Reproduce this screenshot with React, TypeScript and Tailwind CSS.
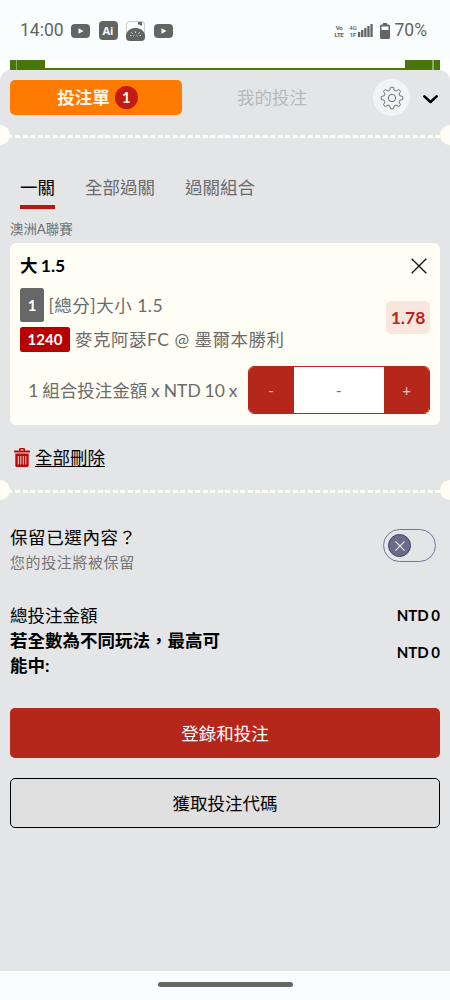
import { useState } from "react";

const tabs = ["一關", "全部過關", "過關組合"];

function YoutubeIcon() {
  return (
    <svg width="19" height="14" viewBox="0 0 19 14">
      <rect width="19" height="14" rx="4" fill="#626562" />
      <path d="M7.500 4.200v5.600l5-2.800z" fill="#f9fdfe" />
    </svg>
  );
}

function PhotoIcon() {
  return (
    <svg width="19" height="20" viewBox="0 0 19 20">
      <rect x="0.4" y="0.4" width="18.2" height="19.2" rx="3.500" fill="#f9fdfe" stroke="#b5b8b7" strokeWidth="0.8" />
      <path d="M0 14C1 9.500 5 7 9.500 7S18 9.500 19 14v2a4 4 0 0 1-4 4H4a4 4 0 0 1-4-4z" fill="#626562" />
      <path d="M12 1h4v3.500h-1.500l-1-1H12z" fill="#626562" />
      <path d="M5.500 11.500l1 .8M9.500 10.500v1.200M13.500 11.500l-1 .8M4.300 14.500h1M13.700 14.500h1M7.500 15l.8-.6M11.500 15l-.8-.6" stroke="#f9fdfe" strokeWidth="1" />
    </svg>
  );
}

function SignalIcon() {
  return (
    <svg width="15" height="13" viewBox="0 0 15 13" fill="#626562">
      <path d="M0 8h2.300v5H0zM3.100 6h2.300v7H3.100zM6.200 4h2.300v9H6.200zM9.300 2h2.300v11H9.300zM12.400 0h2.300v13h-2.300z" />
    </svg>
  );
}

function GearIcon() {
  return (
    <svg width="24" height="24" viewBox="0 0 24 24" fill="none" stroke="#5f6163" strokeWidth="0.9">
      <path
        strokeLinejoin="round"
        d="M10.400 1.500Q12 .7 13.600 1.500L14.300 4.300Q15.200 4.500 16.100 5.100L18.600 3.600Q20.200 4.200 20.500 5.500L19 8Q19.500 8.900 19.700 9.700L22.500 10.400Q23.300 12 22.500 13.600L19.700 14.300Q19.500 15.200 19 16.100L20.400 18.500Q19.800 20.100 18.500 20.400L16.100 19Q15.200 19.500 14.300 19.700L13.600 22.500Q12 23.300 10.400 22.500L9.700 19.700Q8.800 19.500 8 19L5.500 20.400Q3.900 19.800 3.600 18.500L5 16.100Q4.500 15.200 4.300 14.300L1.500 13.600Q.7 12 1.500 10.400L4.300 9.700Q4.500 8.800 5 8L3.600 5.500Q4.200 3.900 5.500 3.600L8 5.100Q8.900 4.500 9.700 4.300z"
      />
      <circle cx="12" cy="12" r="3.700" />
    </svg>
  );
}

function TrashIcon() {
  return (
    <svg width="16" height="19" viewBox="0 0 16 19">
      <path d="M0 2.500h5V1.200Q5 0 6.200 0h3.600Q11 0 11 1.200v1.300h5V4.500H0zM6.500 1.400v1.100h3V1.400z" fill="#bd0b0b" fillRule="evenodd" />
      <path d="M1.300 5.500h13.400V17.500q0 1.500-1.500 1.500H2.800q-1.500 0-1.500-1.500z" fill="#bd0b0b" />
      <path d="M4.300 8v8.500M6.800 8v8.500M9.300 8v8.500M11.800 8v8.500" stroke="#e9d5d6" strokeWidth="1" />
    </svg>
  );
}

function CloseIcon({ size, color, width }: { size: number; color: string; width: number }) {
  return (
    <svg width={size} height={size} viewBox="0 0 16 16" fill="none" stroke={color} strokeWidth={width}>
      <path d="M.7.7l14.600 14.600M15.300.7L.7 15.300" />
    </svg>
  );
}

function StatusBar() {
  return (
    <div className="flex h-[60px] items-center bg-[#f9fdfe] pl-[20px] pr-[23px] pt-[1px] font-[Roboto,sans-serif] text-[#626562]">
      <span className="w-[51px] whitespace-nowrap text-[17.5px]">14:00</span>
      <div className="flex items-center gap-[8.500px]">
        <YoutubeIcon />
        <span className="flex h-[19px] w-[19px] items-center justify-center rounded-[4px] bg-[#626562] font-['Open_Sans',sans-serif] text-[11px] font-bold text-[#f9fdfe]">
          Ai
        </span>
        <PhotoIcon />
        <YoutubeIcon />
      </div>
      <div className="ml-auto flex items-center">
        <span className="mr-[5px] flex w-[9px] flex-col items-center text-[6px] font-bold leading-[7px] tracking-[-0.3px]">
          <span>Vo</span>
          <span>LTE</span>
        </span>
        <span className="flex w-[9px] flex-col items-center text-[6px] font-medium leading-[7px]">
          <span>4G</span>
          <span className="font-bold">1F</span>
        </span>
        <SignalIcon />
        <svg className="ml-[7px]" width="10" height="16" viewBox="0 0 10 16">
          <path d="M3 0h4v1.500h1.500Q10 1.500 10 3v11.500q0 1.500-1.500 1.500h-7Q0 16 0 14.500V3q0-1.500 1.500-1.500H3z" fill="#626562" />
          <path d="M1.500 3.500h7V7h-7z" fill="#f9fdfe" />
        </svg>
        <span className="ml-[5px] text-[17.5px]">70%</span>
      </div>
    </div>
  );
}

function Divider() {
  return (
    <div className="flex h-[20px] items-center overflow-hidden">
      <span className="-ml-[10px] h-[20px] w-[20px] rounded-full bg-[#fffef5]" />
      <span className="mt-[2px] h-[3px] flex-1 bg-[repeating-linear-gradient(90deg,#fffef5_0,#fffef5_2.500px,transparent_2.500px,transparent_5px,#fffef5_5px,#fffef5_7.500px)]" />
      <span className="-mr-[10px] h-[20px] w-[20px] rounded-full bg-[#fffef5]" />
    </div>
  );
}

function BetCard() {
  return (
    <div className="mx-[10px] h-[181.500px] rounded-[6px] bg-[#fffef5] px-[10px] pt-[10px]">
      <div className="flex h-[25px] items-center justify-between">
        <h3 className="font-bold text-black [word-spacing:-1px]">大 1.5</h3>
        <button className="mr-[3px]">
          <CloseIcon size={16} color="#111111" width={1.3} />
        </button>
      </div>

      <div className="mt-[10px] flex h-[64px] items-start justify-between text-[#6b6b6b]">
        <div>
          <div className="flex items-center">
            <span className="flex h-[34px] w-[24px] items-center justify-center rounded-[2.500px] bg-[#676767] text-[15px] font-bold text-white">1</span>
            <span className="ml-[4.500px] tracking-[0.5px]">[總分]大小 1.5</span>
          </div>
          <div className="mt-[5px] flex h-[25px] items-center">
            <span className="flex h-[25px] w-[50px] items-center justify-center rounded-[2.500px] bg-[#b70000] text-[15px] font-bold text-white">1240</span>
            <span className="ml-[5px] whitespace-nowrap tracking-[0.5px]">麥克阿瑟FC @ 墨爾本勝利</span>
          </div>
        </div>
        <span className="mt-[13px] flex h-[33px] w-[44px] items-center justify-center rounded-[5px] bg-[#f8e6df] font-bold text-[#b5261b]">1.78</span>
      </div>

      <div className="mt-[14px] flex h-[48px] items-center justify-end text-[#6b6b6b]">
        <span className="mr-[10px] whitespace-nowrap [word-spacing:-0.6px]">1 組合投注金額 x NTD 10 x</span>
        <div className="flex h-[48px] w-[182.500px] overflow-hidden rounded-[6px] border border-[#b5261b] bg-white">
          <button className="w-[45px] bg-[#b5261b] text-[15px] text-[#f0c9c5]">-</button>
          <span className="flex flex-1 items-center justify-center text-[15px]">-</span>
          <button className="w-[45px] bg-[#b5261b] text-[15px] text-[#f0c9c5]">+</button>
        </div>
      </div>
    </div>
  );
}

export default function App() {
  const [activeTab, setActiveTab] = useState(0);

  return (
    <div className="h-[1000px] w-[450px] overflow-hidden bg-white font-[Lato,'Noto_Sans_CJK_TC',sans-serif] text-[17.5px] leading-[25px] text-black">
      <StatusBar />

      {/* strip of the page behind the slip */}
      <div className="mx-[10px] flex h-[10px] bg-[#49760b]">
        <span className="ml-[6px] mr-[28px] w-px bg-[#91ad68]" />
        <span className="h-[8px] flex-1 bg-white" />
        <span className="ml-[27px] mr-[6px] w-[2px] bg-[#91ad68]" />
      </div>

      <main className="h-[901px] rounded-t-[11px] bg-[#e4e5e7]">
        <header className="flex h-[55px] items-center px-[10px]">
          <button className="flex h-[35px] w-[172px] items-center justify-center gap-[5px] rounded-[5px] bg-[#ff7b00] pl-[3px] font-bold text-[#fff5e8]">
            投注單
            <span className="flex h-[23px] w-[23px] items-center justify-center rounded-full bg-[#c31a12] text-[15px]">1</span>
          </button>
          <button className="w-[180px] text-[#b8b9ba]">我的投注</button>
          <button className="ml-[11px] flex h-[37px] w-[37px] items-center justify-center rounded-full bg-[#f2f3f5]">
            <GearIcon />
          </button>
          <svg className="ml-[13px] mt-[3px]" width="15" height="9" viewBox="0 0 15 9" fill="none" stroke="#000" strokeWidth="2.6">
            <path d="M1.400 1.400l6.100 5.600 6.100-5.600" strokeLinecap="round" strokeLinejoin="round" />
          </svg>
        </header>

        <Divider />

        <nav className="mt-[30px] flex h-[34px] gap-[30px] pl-[20px]">
          {tabs.map((tab, idx) => (
            <button
              key={tab}
              onClick={() => setActiveTab(idx)}
              className={`flex h-[34px] border-b-4 ${activeTab === idx ? "border-[#c0100f] text-black" : "border-transparent text-[#6b6b6b]"}`}
            >
              {tab}
            </button>
          ))}
        </nav>

        <p className="mt-[10px] h-[24px] pl-[10px] text-[13.4px] leading-[20px] text-[#6f7071]">澳洲A聯賽</p>

        <BetCard />

        <div className="mt-[20px] flex h-[25px] items-center gap-[5px] pl-[14px]">
          <TrashIcon />
          <button className="mt-[1px] leading-[20px] underline decoration-[1.300px] underline-offset-[2px]">全部刪除</button>
        </div>

        <div className="pt-[10.500px]">
          <Divider />
        </div>

        <div className="mt-[25px] flex h-[50px] items-start justify-between pl-[10px] pr-[14px]">
          <div>
            <p className="tracking-[0.6px]">保留已選內容？</p>
            <p className="text-[15px] leading-[24px] tracking-[0.6px] text-[#747576]">您的投注將被保留</p>
          </div>
          <button className="mt-[4px] flex h-[33px] w-[53px] items-center rounded-full border border-[#77759b] pl-[4px]">
            <span className="flex h-[23px] w-[23px] items-center justify-center rounded-full border border-[#454170] bg-[#6c6a89]">
              <CloseIcon size={10} color="#f0f0f5" width={1.8} />
            </span>
          </button>
        </div>

        <dl className="mx-[10px] mt-[28px]">
          <div className="flex h-[25px] items-center justify-between">
            <dt>總投注金額</dt>
            <dd className="text-[15px] font-bold [word-spacing:-1px]">NTD 0</dd>
          </div>
          <div className="flex h-[50px] items-center justify-between">
            <dt className="w-[215px] font-bold">若全數為不同玩法，最高可能中:</dt>
            <dd className="-mt-px text-[15px] font-bold [word-spacing:-1px]">NTD 0</dd>
          </div>
        </dl>

        <div className="mx-[10px] mt-[30px] flex flex-col gap-[20px]">
          <button className="h-[50px] rounded-[5px] bg-[#b5261b] text-white">登錄和投注</button>
          <button className="h-[50px] rounded-[5px] border border-black bg-[#e0e0e0]">獲取投注代碼</button>
        </div>
      </main>

      <footer className="flex h-[29px] justify-center bg-[#f9fdfe] pt-[11px]">
        <span className="h-[5px] w-[135px] rounded-full bg-[#656865]" />
      </footer>
    </div>
  );
}
